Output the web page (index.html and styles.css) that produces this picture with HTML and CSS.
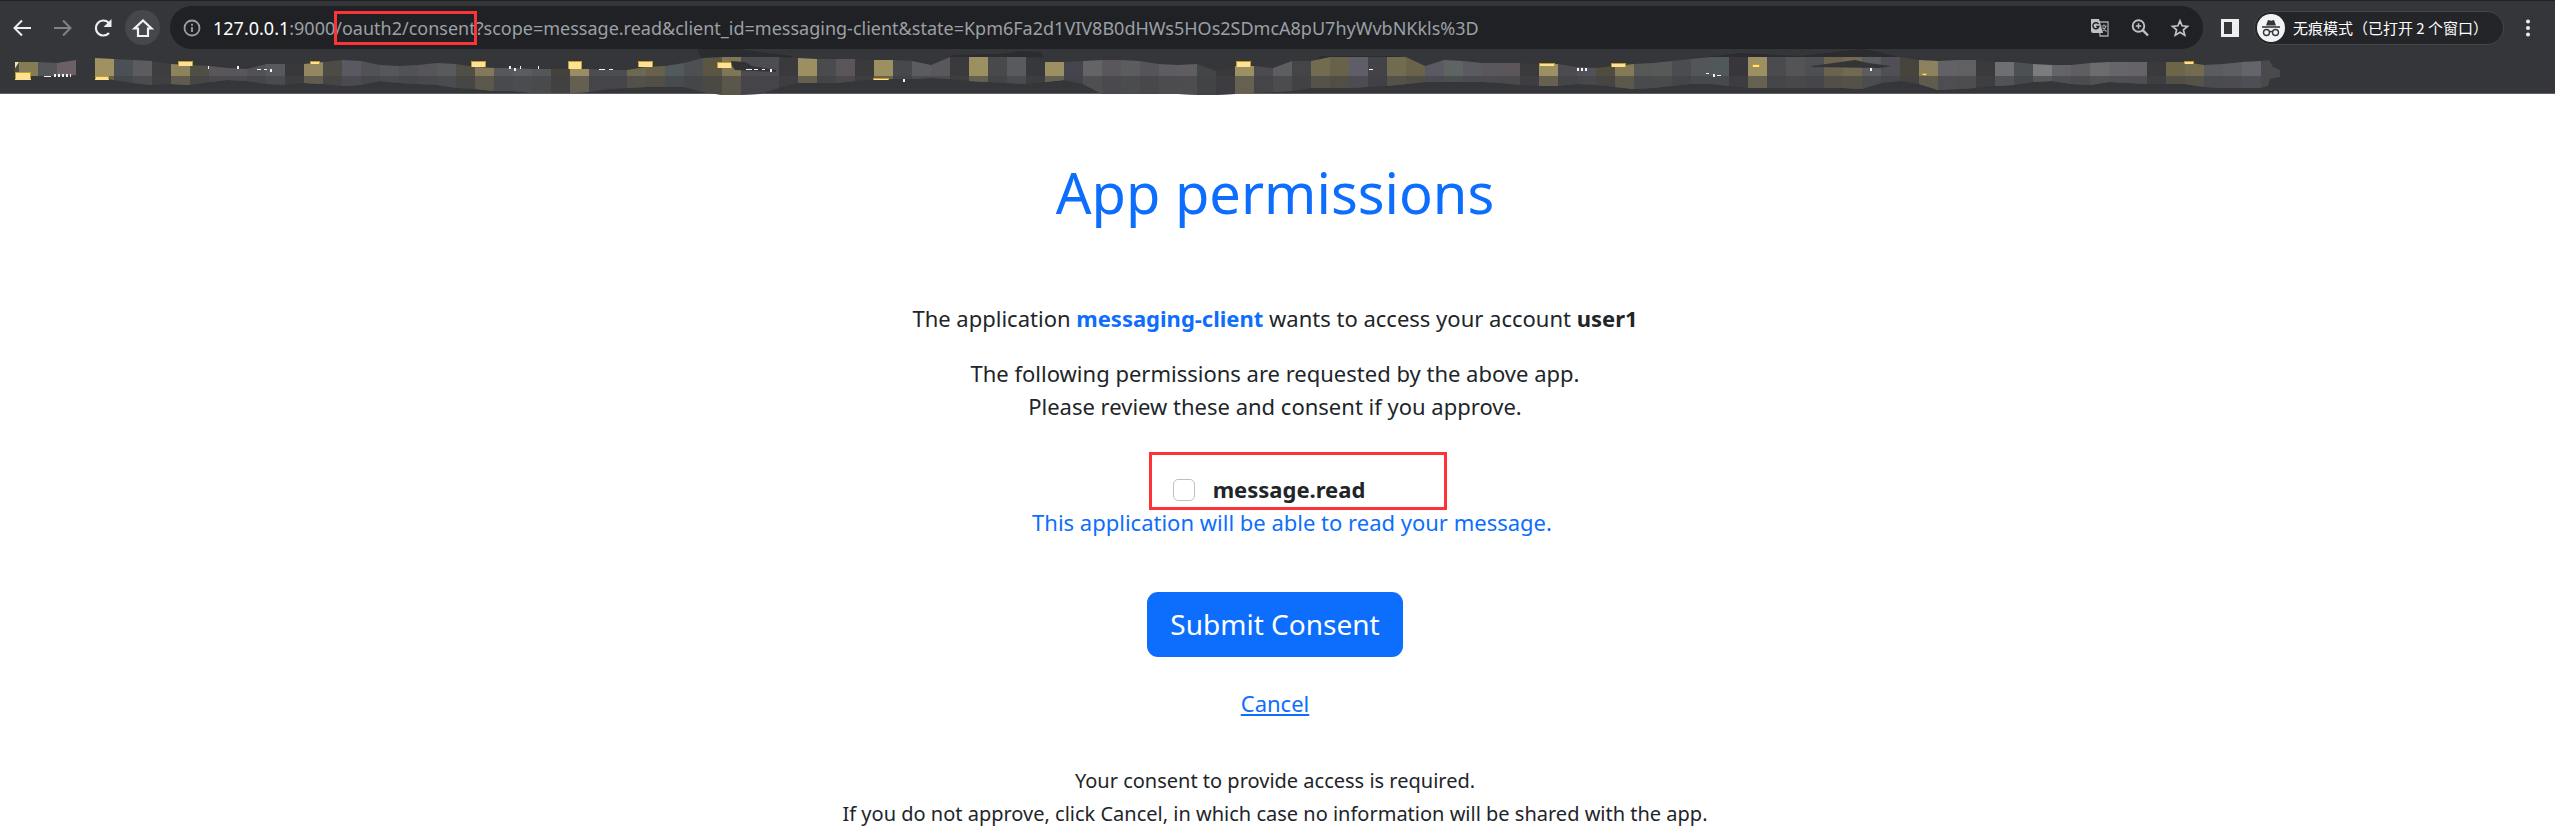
FILE: index.html
```html
<!DOCTYPE html>
<html lang="en">
<head>
<meta charset="utf-8">
<title>App permissions</title>
<link rel="stylesheet" href="styles.css">
</head>
<body>
<header class="browser">
  <div class="toolbar">
    <button class="tool" aria-label="Back"><svg width="24" height="24" viewBox="0 0 24 24" fill="none" stroke="#eceef0" stroke-width="2"><path d="M20 12H4M11 4.500L3.500 12l7.500 7.500"/></svg></button>
    <button class="tool" aria-label="Forward"><svg width="24" height="24" viewBox="0 0 24 24" fill="none" stroke="#818386" stroke-width="2"><path d="M3 12h16M12 4.500l7.500 7.500-7.500 7.500"/></svg></button>
    <button class="tool" aria-label="Reload"><svg width="24" height="24" viewBox="0 0 24 24"><path d="M18 17a7.500 7.500 0 1 1-.5-10.500" fill="none" stroke="#eceef0" stroke-width="2.200"/><path d="M20.500 3v8h-8z" fill="#eceef0"/></svg></button>
    <button class="tool tool-active" aria-label="Home"><svg width="24" height="24" viewBox="0 0 24 24" fill="none" stroke="#f1f2f3" stroke-width="2.200"><path d="M3.500 12.500H7v7.500h10v-7.500h3.500L12 4.500z"/></svg></button>
    <div class="address">
      <svg class="info" width="18" height="18" viewBox="0 0 18 18" fill="none" stroke="#9aa0a6" stroke-width="1.800"><circle cx="9" cy="9" r="7.500"/><path d="M9 8v5M9 4.800v2"/></svg>
      <div class="url"><span class="host">127.0.0.1</span>:9000<span class="marked">/oauth2/consent</span>?scope=message.read&amp;client_id=messaging-client&amp;state=Kpm6Fa2d1VIV8B0dHWs5HOs2SDmcA8pU7hyWvbNKkls%3D</div>
      <button class="mini" aria-label="Translate"><svg width="20" height="20" viewBox="0 0 20 20"><path d="M9 4h9v14H10z" fill="none" stroke="#a5a7aa" stroke-width="1.300"/><path d="M1 1h8l4 14H3a2 2 0 0 1-2-2z" fill="#bdc1c6"/><path d="M8.500 6.200a3 3 0 1 0 .3 2.300H6.200" fill="none" stroke="#202124" stroke-width="1.500"/><path d="M11.500 8h5M14 6.500V8M16 8c-.5 2.500-2 4-3.500 5M12.500 9.500l4 4" fill="none" stroke="#a5a7aa" stroke-width="1.200"/></svg></button>
      <button class="mini" aria-label="Zoom"><svg width="20" height="20" viewBox="0 0 20 20" fill="none" stroke="#bdc1c6"><circle cx="8.500" cy="8" r="5.800" stroke-width="1.900"/><path d="M12.700 12.200L18 17.500" stroke-width="2.400"/><path d="M8.500 5.300v5.400M5.800 8h5.400" stroke-width="1.500"/></svg></button>
      <button class="mini" aria-label="Bookmark this page"><svg width="20" height="20" viewBox="0 0 20 20" fill="none" stroke="#c0c3c7" stroke-width="1.700"><path d="M10 2.800l2.100 5 5.400.5-4.100 3.500 1.300 5.300-4.700-2.900-4.700 2.900 1.300-5.300-4.100-3.500 5.400-.5z"/></svg></button>
    </div>
    <button class="tool panel" aria-label="Side panel"><svg width="20" height="20" viewBox="0 0 20 20"><path fill="#eceef0" fill-rule="evenodd" d="M1 1h18v18H1zM4 4v12h8V4z"/></svg></button>
    <button class="incognito">
      <svg width="28" height="28" viewBox="0 0 28 28"><circle cx="14" cy="14" r="14" fill="#f1f3f4"/><path d="M9 11.500L11 6l3 .8L17 6l2 5.500z" fill="#35363a"/><path d="M5 13h18" stroke="#35363a" stroke-width="1.600"/><g fill="none" stroke="#35363a" stroke-width="1.400"><circle cx="9.500" cy="18.500" r="3"/><circle cx="18.500" cy="18.500" r="3"/><path d="M12.500 18q1.500-1 3 0"/></g></svg>
      <span>无痕模式（已打开 2 个窗口）</span>
    </button>
    <button class="tool menu" aria-label="Menu"><svg width="24" height="24" viewBox="0 0 24 24" fill="#eceef0"><circle cx="12" cy="5.500" r="2"/><circle cx="12" cy="12" r="2"/><circle cx="12" cy="18.500" r="2"/></svg></button>
  </div>
  <svg class="bookmarks" id="bookmarks" width="2300" height="46" viewBox="0 49 2300 46" aria-hidden="true"></svg>
</header>
<main class="page">
  <h1 class="title">App permissions</h1>
  <p class="lead">The application <b class="client">messaging-client</b> wants to access your account <b>user1</b></p>
  <p class="review">The following permissions are requested by the above app.<br>Please review these and consent if you approve.</p>
  <form class="form">
    <div class="scope">
      <input class="check" type="checkbox" id="scope-read">
      <label class="scope-name" for="scope-read">message.read</label>
    </div>
    <p class="scope-text">This application will be able to read your message.</p>
    <button class="submit" type="button">Submit Consent</button>
    <a class="cancel" href="#">Cancel</a>
  </form>
  <p class="note">Your consent to provide access is required.<br>If you do not approve, click Cancel, in which case no information will be shared with the app.</p>
</main>
<script src="bookmarks.js"></script>
</body>
</html>
```
FILE: styles.css
```css
* { box-sizing: border-box; }
body {
  margin: 0;
  background: #fff;
  color: #212529;
  font: 22px/33px "Noto Sans", "Open Sans", "Noto Sans CJK SC", sans-serif;
}
button { font: inherit; border: 0; padding: 0; background: none; color: inherit; }
svg { display: block; }

.browser {
  height: 94px;
  background: #35363a;
  border-top: 1px solid #202124;
  border-bottom: 1px solid #5f6063;
}
.toolbar {
  display: flex;
  align-items: center;
  height: 43px;
  margin-top: 5px;
  padding: 0 5px;
}
.tool {
  display: grid;
  place-items: center;
  flex: none;
  width: 35px;
  height: 35px;
  margin-right: 5px;
}
.tool-active { border-radius: 50%; background: #46474b; margin-right: 10px; }
.address {
  display: flex;
  align-items: center;
  flex: 1;
  min-width: 0;
  height: 43px;
  padding: 0 13px;
  border-radius: 22px;
  background: #202124;
}
.info { flex: none; margin-right: 12px; }
.url {
  flex: 1;
  font-size: 18px;
  line-height: 28px;
  color: #9aa0a6;
  white-space: nowrap;
}
.host { color: #fff; }
.marked { position: relative; }
.marked::after {
  content: "";
  position: absolute;
  inset: -5px -1px -5px -1px;
  border: 3px solid #fc3437;
}
.mini { width: 20px; height: 20px; margin-left: 20px; }
.panel { margin: 0 7px 0 9px; }
.incognito {
  display: flex;
  align-items: center;
  flex: none;
  gap: 8px;
  height: 34px;
  width: 250px;
  padding: 0 2px;
  margin-right: 6px;
  border: 1px solid #45464a;
  border-radius: 17px;
  background: #242528;
  color: #fff;
  font: 15px/20px "Noto Sans CJK SC", sans-serif;
  white-space: nowrap;
}

.page {
  display: flex;
  flex-direction: column;
  align-items: center;
  padding: 62px 5px 0 0;
  text-align: center;
}
.title { margin: 0 0 74px; font-size: 56px; line-height: 72px; font-weight: 400; color: #0d6efd; }
.lead { margin: 0 0 22px; }
.client { color: #0d6efd; }
b, .scope-name { font-weight: 700; }
.review { margin: 0 0 50px; }
.form { display: flex; flex-direction: column; align-items: center; }
.scope {
  position: relative;
  display: flex;
  align-items: center;
  gap: 18px;
  margin-right: 12px;
}
.scope::after {
  content: "";
  position: absolute;
  inset: -21px -82px -4px -24px;
  border: 3px solid #fc3437;
  pointer-events: none;
}
.check {
  appearance: none;
  width: 22px;
  height: 22px;
  margin: 0;
  border: 1px solid #bfbfbf;
  border-radius: 5px;
  background: #fff;
}
.scope-text { margin: 0 0 53px; padding-left: 34px; color: #0d6efd; }
.submit {
  padding: 11px 23px;
  margin-bottom: 30px;
  border-radius: 11px;
  background: #0d6efd;
  color: #fff;
  font-size: 28px;
  line-height: 43px;
}
.cancel { color: #0d6efd; }
.note { margin: 44px 0 0; font-size: 20px; }
```
FILE: bookmarks.js
```js
const NS = "http://www.w3.org/2000/svg";
const svg = document.getElementById("bookmarks");
const add = (name, attrs) => {
  const el = document.createElementNS(NS, name);
  for (const k in attrs) el.setAttribute(k, attrs[k]);
  svg.appendChild(el);
};
const poly = (points, fill) => add("polygon", { points, fill });
const rect = (x, y, width, height, fill) => add("rect", { x, y, width, height, fill });

// Soft dark strokes behind the tiles
poly("699,44 720,44 745,50 792,56 792,60 703,60 698,52", "#2b2c30");
poly("946,60 952,55 1000,54 1020,51 1041,52 1043,57 960,60", "#2b2c30");
poly("1317,60 1320,56 1400,56 1400,60", "#2b2c30");
poly("1692,59 1740,53 1800,56 1860,49 1880,52 1915,62 1692,62", "#2b2c30");

// Folder remnants below the tiles
rect(15, 62, 16, 18, "#fde293");
rect(95, 62, 14, 18, "#fde293");

const colors = ("4b4b45 857b55 535557 6a6065 - 9f9160 4a5053 5c5b60 3e3d40 8c825c 4f4f45 5b565a 58585c 505256 58585f 38383b 92875f 4d4b46 5a5962 505256 55585a 505255 56565a 595a5c 4f4f45 83795a 55585c 5a5c60 545759 44423d 9a8d63 4c4d51 4c4d51 6d6850 67614b 535a5e 4d4f53 5b5644 7f7655 4c4b50 4d4c50 3a393c 9c8f61 4a4b4f 5a5559 3a393c 9c8f61 47484b 5a5c60 5a585c 3a393c 9c8f61 47494b 585a5e 37383b 9c8f61 44444e 646466 59575c 5b5c5e 545459 5d5c60 5f5d62 424644 39393c 9c8f61 4b4a50 5c5e60 454447 736b50 69624a 5e5d68 434247 716b50 6a6349 5a5a64 5e6462 5a5b60 5a575c 5c565a 3a393c 9c8f61 4c4b50 505258 504d40 847a57 565858 555a59 4b4c51 525659 51585b 38353b 9c8f61 4b4a4e 545456 4e4f53 6b6350 716a50 5b5c60 504f56 47443e 8c8260 626266 606062 3a393c 6d6f73 4c5055 7b7c7e 626468 5e5d62 6c6c6e 66656b 656368 3a3a3d 6d654a 736b50 595b60 5d5e62 63646c").split(" ");
const tops = [70,62,62,63,60,58,59,60,61,64,65,66,68,69,64,64,64,62,60,61,65,66,65,63,64,67,68,68,69,69,69,69,70,70,67,66,63,58,57,57,57,57,58,59,59,59,60,60,61,65,57,57,57,57,57,62,62,61,60,60,61,64,65,64,71,66,66,68,61,61,57,57,57,57,57,66,60,61,63,63,63,64,64,67,68,66,64,63,61,59,57,57,57,57,57,57,57,57,57,57,57,60,61,60,60,62,62,64,65,65,63,62,62,62,62,62,65,64,62,61];
const bottoms = [71,76,76,76,75,76,80,83,85,84,85,82,80,81,84,85,83,84,86,85,81,83,84,85,88,89,91,91,93,93,93,92,89,88,87,87,87,92,95,95,94,88,83,83,83,81,80,79,79,78,79,81,82,83,84,82,80,84,94,94,94,94,94,95,95,94,93,92,91,88,88,88,87,86,84,82,82,82,82,83,85,86,86,84,85,87,89,88,86,84,84,86,88,88,88,88,88,88,89,83,81,84,90,89,88,86,85,82,81,84,85,82,83,84,84,84,87,88,88,88];
colors.forEach((c, i) => {
  if (c === "-") return;
  const l = i ? i * 19 : 14, r = (i + 1) * 19;
  const t = tops[i], u = tops[i + 1], a = bottoms[i], b = bottoms[i + 1];
  poly(`${l},${t} ${r},${u} ${r},${b} ${l},${a}`, "#" + c);
  // The lower half of each tile is dimmed
  if (a > 76 || b > 76) poly(`${l},76 ${r},76 ${r},${Math.max(b, 76)} ${l},${Math.max(a, 76)}`, "rgba(65,65,69,.6)");
});
poly("2261,61 2269,60 2273,67 2280,70 2280,77 2270,79 2268,86 2261,88", "#4a494c");

// Visible slivers of folder icons
[[16,73,14,6],[96,77,12,2],[179,62,13,4],[311,62,8,2],[472,62,13,5],[569,62,12,7],[639,62,13,5],[718,63,13,5],[874,79,14,1],[1237,62,13,5],[1540,64,14,2],[1612,64,13,3],[1753,65,6,2],[1837,64,13,3],[1923,74,3,1],[2185,62,8,2]].forEach(([x, y, w, h]) => {
  rect(x - 1, y - 1, w + 2, h + 1, "#c49a2a");
  rect(x, y, w, h, "#fde293");
});
poly("731,61 745,62 752,66 776,70 776,72 735,70 732,66", "#313236");
poly("1812,66 1855,60 1868,63 1891,66 1880,68 1812,67", "#333438");

// Visible slivers of folder names
[[44,76,7],[54,74,2],[58,74,2],[62,74,2],[66,74,2],[70,74,1],[208,66,1],[237,66,2],[257,69,4],[264,69,3],[270,69,2],[509,66,2],[514,68,2],[520,66,1],[538,66,1],[599,69,6],[609,69,4],[746,69,6],[754,69,4],[762,69,3],[770,69,2],[903,79,2],[1369,69,4],[1577,68,2],[1581,68,2],[1585,68,2],[1706,73,3],[1713,74,2],[1717,75,4],[1870,68,2]].forEach(([x, y, w]) => rect(x, y, w, w < 3 ? 3 : 1, "#f1f3f4"));
```
